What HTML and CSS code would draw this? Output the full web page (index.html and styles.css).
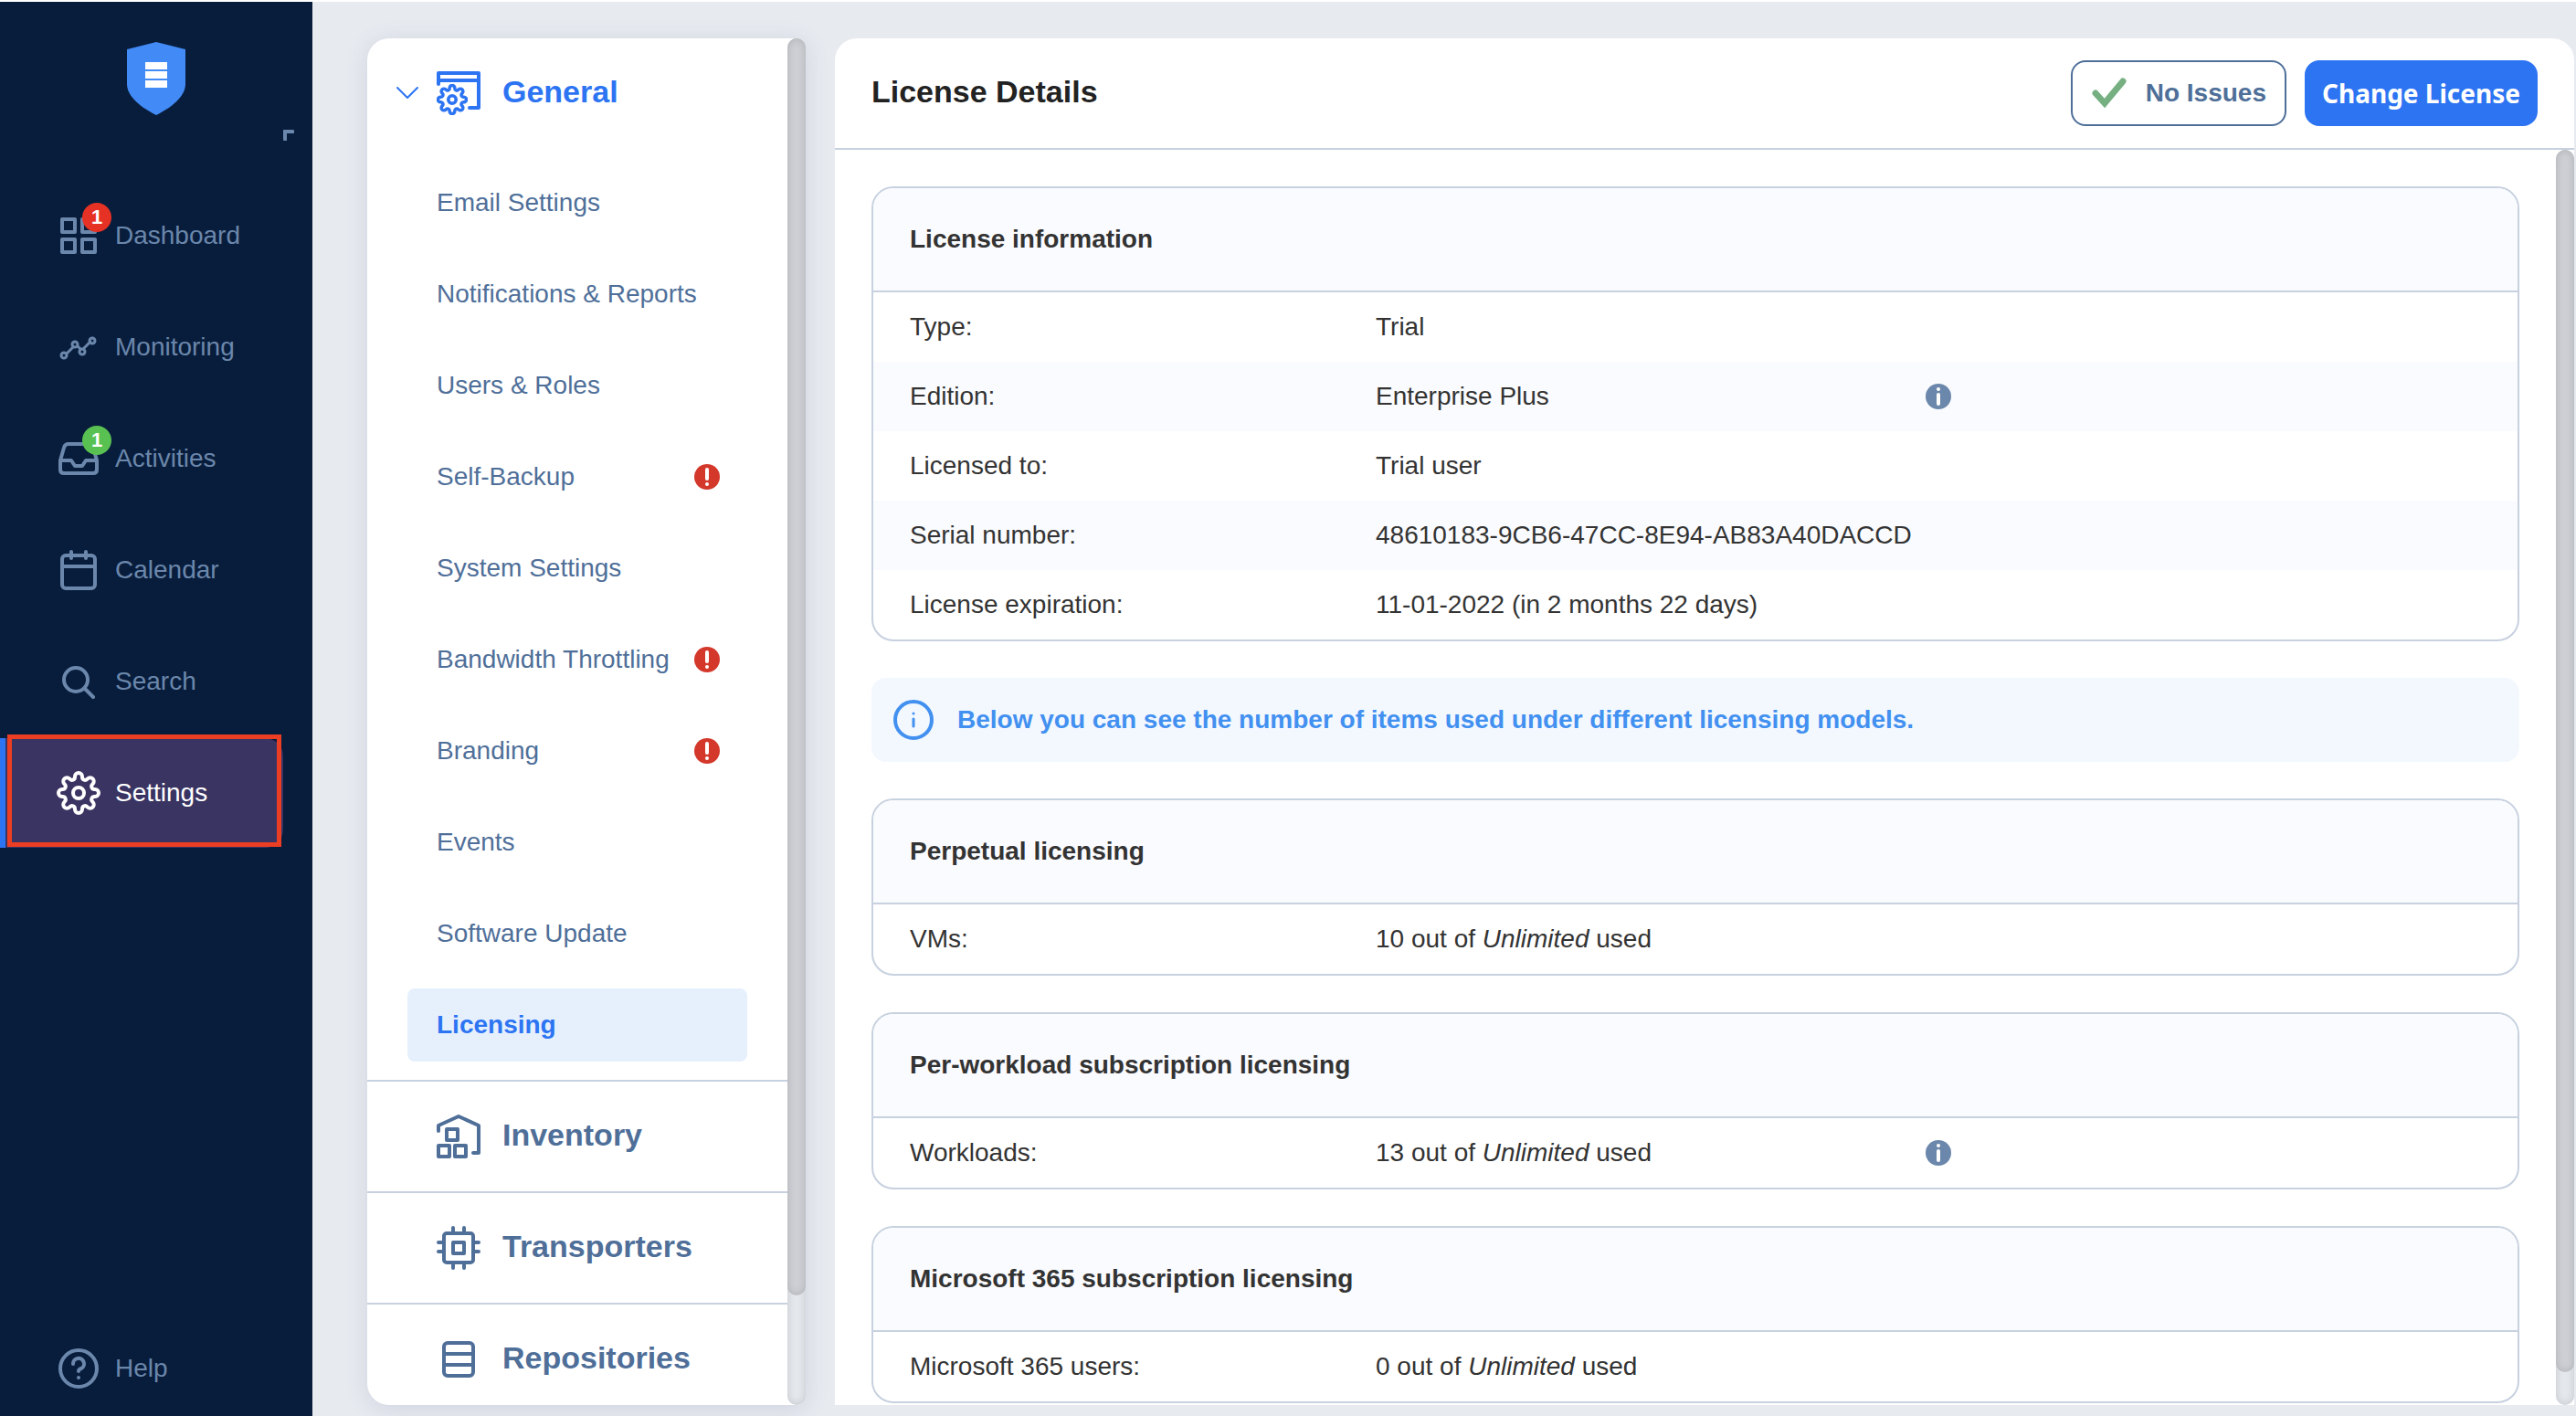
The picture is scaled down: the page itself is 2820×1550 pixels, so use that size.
FILE: index.html
```html
<!DOCTYPE html>
<html lang="en">
<head>
<meta charset="UTF-8">
<meta name="viewport" content="width=device-width, initial-scale=1">
<title>Settings - Licensing</title>
<link rel="stylesheet" href="styles.css">
</head>

<body>
<!-- Shared icons -->
<svg class="defs" aria-hidden="true">
<symbol id="alert" viewBox="0 0 28 28"><circle cx="14" cy="14" r="14" fill="#d3382b"/><path d="M14 6v10" stroke="#fff" stroke-width="4" stroke-linecap="round"/><circle cx="14" cy="22" r="2" fill="#fff"/></symbol>
<symbol id="info" viewBox="0 0 28 28"><circle cx="14" cy="14" r="14" fill="#6b87ab"/><circle cx="14" cy="6" r="2" fill="#fff"/><path d="M14 12v10" stroke="#fff" stroke-width="4" stroke-linecap="round"/></symbol>
<symbol id="gear" viewBox="0 0 48 48"><path d="M20 6A4 4 0 0 1 28 6V6.640A3.200 3.200 0 0 0 33.440 8.900L33.900 8.440A4 4 0 0 1 39.560 14.100L39.100 14.560A3.200 3.200 0 0 0 41.360 20H42A4 4 0 0 1 42 28H41.360A3.200 3.200 0 0 0 39.100 33.440L39.560 33.900A4 4 0 0 1 33.900 39.560L33.440 39.100A3.200 3.200 0 0 0 28 41.360V42A4 4 0 0 1 20 42V41.360A3.200 3.200 0 0 0 14.560 39.100L14.100 39.560A4 4 0 0 1 8.440 33.900L8.900 33.440A3.200 3.200 0 0 0 6.640 28H6A4 4 0 0 1 6 20H6.640A3.200 3.200 0 0 0 8.900 14.560L8.440 14.100A4 4 0 0 1 14.100 8.440L14.560 8.900A3.200 3.200 0 0 0 20 6.640Z"/><circle cx="24" cy="24" r="6"/></symbol>
</svg>

<div id="app">

<!-- Sidebar -->
<nav class="sidebar">
<div class="brand">
<svg class="logo" viewBox="0 0 64 80"><path d="M32 0l32 8v38c0 14-16 26-32 34C16 72 0 60 0 46V8z" fill="#428af5"/><path d="M20 22h24v8H20zM20 32h24v8H20zM20 42h24v8H20z" fill="#fff"/></svg>
<button class="collapse" aria-label="Collapse menu"></button>
</div>
<a href="#" class="nav-item">
<span class="nav-icon"><svg viewBox="0 0 48 48"><rect x="6" y="6" width="14" height="14"/><rect x="28" y="6" width="14" height="14"/><rect x="6" y="28" width="14" height="14"/><rect x="28" y="28" width="14" height="14"/></svg><span class="badge red">1</span></span>
Dashboard</a>
<a href="#" class="nav-item">
<span class="nav-icon"><svg class="thin" viewBox="0 0 48 48"><path d="M11 31l7-7M23 23l3 3M30 25l7-7"/><circle cx="8" cy="33" r="3"/><circle cx="20" cy="21" r="3"/><circle cx="28" cy="29" r="3"/><circle cx="39" cy="17" r="3"/></svg></span>
Monitoring</a>
<a href="#" class="nav-item">
<span class="nav-icon"><svg viewBox="0 0 48 48"><path d="M4 26l4-14q1-4 5-4h22q4 0 5 4l4 14v10q0 4-4 4H8q-4 0-4-4zM4 26h12l4 6h8l4-6h12"/></svg><span class="badge green">1</span></span>
Activities</a>
<a href="#" class="nav-item">
<span class="nav-icon"><svg viewBox="0 0 48 48"><rect x="6" y="8" width="36" height="36" rx="4"/><path d="M6 20h36M16 4v7M32 4v7"/></svg></span>
Calendar</a>
<a href="#" class="nav-item">
<span class="nav-icon"><svg viewBox="0 0 48 48"><circle cx="21" cy="22" r="13"/><path d="M31 32l9 9"/></svg></span>
Search</a>
<a href="#" class="nav-item active">
<span class="nav-icon"><svg viewBox="0 0 48 48"><use href="#gear"/></svg></span>
Settings</a>
<a href="#" class="nav-item help">
<span class="nav-icon"><svg viewBox="0 0 48 48"><circle cx="24" cy="24" r="20"/><path d="M18 19a6 6 0 1 1 9 5q-3 1-3 3"/><path d="M24 34v0"/></svg></span>
Help</a>
</nav>

<!-- Settings menu -->
<div class="menu">
<div class="menu-list">
<div class="section open">
<button class="section-head" aria-expanded="true">
<svg class="chevron" viewBox="0 0 24 24"><path d="M1 6l11 11L23 6"/></svg>
<svg class="section-icon" viewBox="0 0 48 48"><path d="M2 14V2h44v38H36M2 10h44"/><svg x="0" y="14" width="34" height="34" viewBox="0 0 48 48" stroke-width="5"><use href="#gear"/></svg></svg>
<span class="section-title">General</span>
</button>
<div class="items">
<a href="#">Email Settings</a>
<a href="#">Notifications &amp; Reports</a>
<a href="#">Users &amp; Roles</a>
<a href="#">Self-Backup<svg><use href="#alert"/></svg></a>
<a href="#">System Settings</a>
<a href="#">Bandwidth Throttling<svg><use href="#alert"/></svg></a>
<a href="#">Branding<svg><use href="#alert"/></svg></a>
<a href="#">Events</a>
<a href="#">Software Update</a>
<a href="#" class="selected">Licensing</a>
</div>
</div>
<div class="section">
<button class="section-head">
<span class="chevron"></span>
<svg class="section-icon" viewBox="0 0 48 48"><path d="M2 18v-6L24 2l22 10v30h-6"/><path d="M11 16h12v12H11zM2 34h12v12H2zM20 34h12v12H20z"/></svg>
<span class="section-title">Inventory</span>
</button>
</div>
<div class="section">
<button class="section-head">
<span class="chevron"></span>
<svg class="section-icon" viewBox="0 0 48 48"><rect x="8" y="8" width="32" height="32" rx="3"/><path d="M18 18h12v12H18zM18 8V2M30 8V2M18 46v-6M30 46v-6M8 18H2M8 28H2M46 18h-6M46 28h-6"/></svg>
<span class="section-title">Transporters</span>
</button>
</div>
<div class="section">
<button class="section-head">
<span class="chevron"></span>
<svg class="section-icon" viewBox="0 0 48 48"><rect x="8" y="6" width="32" height="36" rx="4"/><path d="M8 18h32M8 30h32"/></svg>
<span class="section-title">Repositories</span>
</button>
</div>
</div>
<div class="scrollbar"><div class="thumb"></div></div>
</div>

<!-- License details -->
<main class="main">
<header class="header">
<h1>License Details</h1>
<button class="btn">
<svg viewBox="0 0 40 40"><path d="M5 20l10 11L35 7"/></svg>
No Issues</button>
<button class="btn primary">Change License</button>
</header>
<div class="body">
<div class="content">

<section class="card">
<h2>License information</h2>
<table>
<tr><th scope="row">Type:</th><td>Trial</td><td></td></tr>
<tr><th scope="row">Edition:</th><td>Enterprise Plus</td><td><svg><use href="#info"/></svg></td></tr>
<tr><th scope="row">Licensed to:</th><td>Trial user</td><td></td></tr>
<tr><th scope="row">Serial number:</th><td>48610183-9CB6-47CC-8E94-AB83A40DACCD</td><td></td></tr>
<tr><th scope="row">License expiration:</th><td>11-01-2022 (in 2 months 22 days)</td><td></td></tr>
</table>
</section>

<div class="notice">
<svg viewBox="0 0 44 44"><circle cx="22" cy="22" r="20"/><path class="thin" d="M22 15v0M22 21v8"/></svg>
Below you can see the number of items used under different licensing models.
</div>

<section class="card">
<h2>Perpetual licensing</h2>
<table>
<tr><th scope="row">VMs:</th><td>10 out of <i>Unlimited</i> used</td><td></td></tr>
</table>
</section>

<section class="card">
<h2>Per-workload subscription licensing</h2>
<table>
<tr><th scope="row">Workloads:</th><td>13 out of <i>Unlimited</i> used</td><td><svg><use href="#info"/></svg></td></tr>
</table>
</section>

<section class="card">
<h2>Microsoft 365 subscription licensing</h2>
<table>
<tr><th scope="row">Microsoft 365 users:</th><td>0 out of <i>Unlimited</i> used</td><td></td></tr>
</table>
</section>

</div>
<div class="scrollbar"><div class="thumb"></div></div>
</div>
</main>

</div>
</body>
</html>
```
FILE: styles.css
```css
*,*::after{margin:0;padding:0;box-sizing:border-box;}
body{background:#e7eaef;color:#333;font:28px/32px "Liberation Sans",Arial,sans-serif;overflow:hidden;}
a{color:inherit;text-decoration:none;}
button{font:inherit;color:inherit;background:none;border:none;cursor:pointer;}
svg{fill:none;stroke-linecap:round;stroke-linejoin:round;flex:none;}
.defs{position:absolute;width:0;height:0;}
#app{display:flex;height:100vh;border-top:2px solid #fff;}

/* Sidebar */
.sidebar{
width:342px;flex:none;background:#081d3c;color:#6b87ab;
display:flex;flex-direction:column;gap:2px;
}
.brand{height:194px;padding:44px 20px 0;display:flex;flex-direction:column;align-items:center;gap:16px;}
.logo{width:64px;height:80px;}
.collapse{width:12px;height:12px;border-top:4px solid #6b87ab;border-left:4px solid #6b87ab;align-self:flex-end;border-radius:1px;}
.nav-item{width:310px;height:120px;padding-left:62px;display:flex;align-items:center;gap:16px;}
.nav-icon{position:relative;width:48px;height:48px;}
.nav-icon svg{width:48px;height:48px;stroke:currentColor;stroke-width:4;}
.thin,.nav-icon svg.thin{stroke-width:3;}
.badge{
position:absolute;left:28px;top:-12px;width:32px;height:32px;border-radius:50%;
color:#fff;font-size:22px;font-weight:bold;text-align:center;
}
.red{background:#e63225;}
.green{background:#59c152;}
.active{
position:relative;background:#393462;color:#fff;border-left:6px solid #2d74f3;
padding-left:56px;border-radius:0 20px 20px 0;
}
.active::after{content:"";position:absolute;left:2px;top:-4px;width:300px;height:123px;border:5px solid #ec3e23;}
.help{height:104px;margin-top:auto;}

/* Scrollbars */
.scrollbar{width:20px;flex:none;background:#e4e8ed;border-radius:10px;box-shadow:inset 0 0 8px rgba(0,0,0,.15);}
.thumb{background:#cdcfd4;border-radius:10px;box-shadow:inset 0 0 8px rgba(0,0,0,.15);}

/* Settings menu */
.menu{
width:480px;flex:none;margin:40px 32px 12px 60px;background:#fff;color:#4f6f99;
border-radius:24px 10px 10px 24px;box-shadow:0 4px 24px rgba(80,90,150,.15);display:flex;
}
.menu-list{flex:1;overflow:hidden;}
.menu .thumb{height:92%;}
.section + .section{border-top:2px solid #c7d1df;}
.section-head{width:100%;height:120px;padding-left:32px;display:flex;align-items:center;}
.section-icon{width:48px;height:48px;margin:0 24px 0 20px;stroke:currentColor;stroke-width:4;}
.chevron{width:24px;height:24px;stroke:currentColor;stroke-width:2;}
.section-title{font-size:34px;line-height:40px;font-weight:bold;padding-bottom:4px;}
.open .section-head{color:#2d74f3;}
.items{padding:20px 44px;display:flex;flex-direction:column;gap:20px;}
.items a{height:80px;padding:0 30px 0 32px;border-radius:8px;display:flex;align-items:center;justify-content:space-between;white-space:nowrap;}
.items svg{width:28px;height:28px;}
.items .selected{background:#e6f0fd;color:#2d74f3;font-weight:bold;}

/* Main */
.main{
flex:1;margin:40px 2px 12px 0;background:#fff;border-radius:24px 24px 0 0;
display:flex;flex-direction:column;
}
.header{height:122px;flex:none;padding:0 40px;display:flex;align-items:center;gap:20px;border-bottom:2px solid #c7d1df;}
h1{flex:1;font-size:34px;line-height:40px;padding-bottom:4px;color:#222;}
.btn{
height:72px;padding:0 20px;border:2px solid #4f6f99;border-radius:16px;color:#4f6f99;
font-weight:bold;display:flex;align-items:center;gap:20px;
}
.btn svg{width:40px;height:40px;stroke:#76b082;stroke-width:7;stroke-linejoin:miter;}
.primary{background:#2d74f3;border-color:#2d74f3;color:#fff;padding:0 17px;font-family:"Noto Sans",sans-serif;}
.body{flex:1;min-height:0;display:flex;}
.body .thumb{height:calc(100% - 36px);}
.content{flex:1;padding:40px;display:flex;flex-direction:column;gap:40px;overflow:hidden;}

.card{flex:none;border:2px solid #c7d1df;border-radius:24px;overflow:hidden;}
.card h2{height:114px;padding:0 40px;font-size:28px;line-height:112px;background:#fafbfe;border-bottom:2px solid #c7d1df;}
table{width:100%;border-collapse:collapse;table-layout:fixed;}
tr:nth-child(even){background:#fafbfe;}
th{width:550px;height:76px;padding-left:40px;font-weight:normal;text-align:left;}
td{white-space:nowrap;}
td:nth-child(2){width:602px;}
td svg{width:28px;height:28px;display:block;}

.notice{
height:92px;flex:none;padding:0 24px;border-radius:16px;background:#f3f8ff;color:#4290f0;
font-weight:bold;display:flex;align-items:center;gap:26px;
}
.notice svg{width:44px;height:44px;stroke:currentColor;stroke-width:4;}
```
